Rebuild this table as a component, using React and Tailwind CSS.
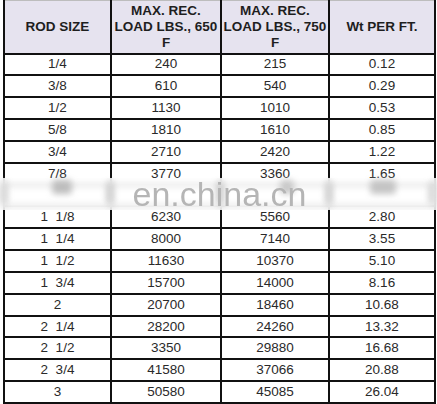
import React from "react";

const rows = [
  ["1/4", "240", "215", "0.12"],
  ["3/8", "610", "540", "0.29"],
  ["1/2", "1130", "1010", "0.53"],
  ["5/8", "1810", "1610", "0.85"],
  ["3/4", "2710", "2420", "1.22"],
  ["7/8", "3770", "3360", "1.65"],
  ["", "", "", ""],
  ["1  1/8", "6230", "5560", "2.80"],
  ["1  1/4", "8000", "7140", "3.55"],
  ["1  1/2", "11630", "10370", "5.10"],
  ["1  3/4", "15700", "14000", "8.16"],
  ["2", "20700", "18460", "10.68"],
  ["2  1/4", "28200", "24260", "13.32"],
  ["2  1/2", "3350", "29880", "16.68"],
  ["2  3/4", "41580", "37066", "20.88"],
  ["3", "50580", "45085", "26.04"],
];

export default function App() {
  return (
    <div
      className="relative w-[437px] h-[404px] bg-white overflow-hidden"
      style={{ fontFamily: '"Liberation Sans", Arial, sans-serif' }}
    >
      <table className="ml-[3px] w-[431px] table-fixed border-collapse text-[#2a2a2a]">
        <colgroup>
          <col className="w-[107px]" />
          <col className="w-[110px]" />
          <col className="w-[108px]" />
          <col className="w-[106px]" />
        </colgroup>
        <thead>
          <tr className="bg-[#e6e3ef]">
            <th className="h-[53px] border-2 border-t border-[#111] border-t-[#bdbdbd] p-0 text-[13.5px] font-bold leading-[15px] text-[#1e1e1e]">
              ROD SIZE
            </th>
            <th className="h-[53px] border-2 border-t border-[#111] border-t-[#bdbdbd] p-0 text-[13.5px] font-bold leading-[16px] text-[#1e1e1e] whitespace-nowrap">
              MAX. REC.
              <br />
              LOAD LBS., 650
              <br />F
            </th>
            <th className="h-[53px] border-2 border-t border-[#111] border-t-[#bdbdbd] p-0 text-[13.5px] font-bold leading-[16px] text-[#1e1e1e] whitespace-nowrap">
              MAX. REC.
              <br />
              LOAD LBS., 750
              <br />F
            </th>
            <th className="h-[53px] border-2 border-t border-[#111] border-t-[#bdbdbd] p-0 text-[13.5px] font-bold leading-[15px] text-[#1e1e1e]">
              Wt PER FT.
            </th>
          </tr>
        </thead>
        <tbody>
          {rows.map((r, i) => (
            <tr key={i}>
              {r.map((c, j) => (
                <td
                  key={j}
                  className="h-[21.85px] border-2 border-[#111] p-0 text-center text-[13.5px] leading-[16px] whitespace-pre"
                >
                  {c}
                </td>
              ))}
            </tr>
          ))}
        </tbody>
      </table>

      <div className="absolute left-0 top-[178px] w-[437px] h-[32px] bg-white/80 backdrop-blur-[3px] flex items-center justify-center">
        <div className="absolute left-[0px] top-[4px] w-[8px] h-[22px] rounded-full bg-[#d8d8d8] blur-[3px]" />
        <div className="absolute left-[52px] top-[2px] w-[20px] h-[14px] rounded bg-[#bdbdbd] blur-[3px]" />
        <div className="absolute left-[106px] top-[4px] w-[8px] h-[22px] rounded-full bg-[#cfcfcf] blur-[3px]" />
        <div className="absolute left-[216px] top-[4px] w-[8px] h-[22px] rounded-full bg-[#cfcfcf] blur-[3px]" />
        <div className="absolute left-[280px] top-[2px] w-[14px] h-[14px] rounded bg-[#c8c8c8] blur-[3px]" />
        <div className="absolute left-[325px] top-[4px] w-[8px] h-[22px] rounded-full bg-[#d0d0d0] blur-[3px]" />
        <div className="absolute left-[370px] top-[2px] w-[26px] h-[14px] rounded bg-[#c4c4c4] blur-[3px]" />
        <div className="absolute left-[428px] top-[4px] w-[8px] h-[22px] rounded-full bg-[#d8d8d8] blur-[3px]" />
        <span
          className="relative text-[34px] leading-none text-[#b5b5b5] ml-[2px]"
          style={{ fontFamily: '"Liberation Sans", Arial, sans-serif' }}
        >
          en.china.cn
        </span>
      </div>
    </div>
  );
}
